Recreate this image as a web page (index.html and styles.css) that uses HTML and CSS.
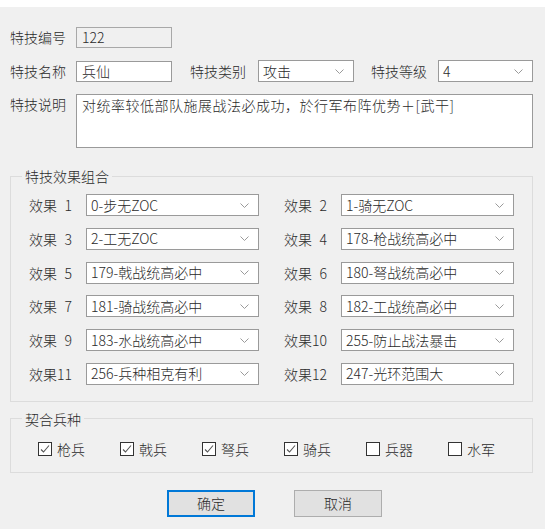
FILE: index.html
```html
<!DOCTYPE html>
<html lang="zh-CN">
<head>
<meta charset="utf-8">
<title>特技编辑</title>
<link rel="stylesheet" href="styles.css">
</head>
<body>
<div class="strip"></div>
<div class="dialog">
  <div class="row r1">
    <span class="lbl">特技编号</span>
    <div class="field disabled w96">122</div>
  </div>
  <div class="row r2">
    <span class="lbl">特技名称</span>
    <div class="field w96">兵仙</div>
    <span class="lbl2">特技类别</span>
    <div class="field select w96"><span>攻击</span><svg class="chev" width="9" height="5" viewBox="0 0 9 5"><polyline points="0.5,0.5 4.5,4.5 8.5,0.5" fill="none" stroke="#9a9a9a" stroke-width="1"/></svg></div>
    <span class="lbl3">特技等级</span>
    <div class="field select grow"><span>4</span><svg class="chev" width="9" height="5" viewBox="0 0 9 5"><polyline points="0.5,0.5 4.5,4.5 8.5,0.5" fill="none" stroke="#9a9a9a" stroke-width="1"/></svg></div>
  </div>
  <div class="row r3">
    <span class="lbl top">特技说明</span>
    <div class="field textarea grow">对统率较低部队施展战法必成功，於行军布阵优势＋[武干]</div>
  </div>

  <fieldset class="group effects">
    <legend>特技效果组合</legend>
    <div class="grid">
      <span class="elbl">效果<span class="num">1</span></span>
      <div class="field select"><span>0-步无ZOC</span><svg class="chev" width="9" height="5" viewBox="0 0 9 5"><polyline points="0.5,0.5 4.5,4.5 8.5,0.5" fill="none" stroke="#9a9a9a" stroke-width="1"/></svg></div>
      <span></span>
      <span class="elbl">效果<span class="num">2</span></span>
      <div class="field select"><span>1-骑无ZOC</span><svg class="chev" width="9" height="5" viewBox="0 0 9 5"><polyline points="0.5,0.5 4.5,4.5 8.5,0.5" fill="none" stroke="#9a9a9a" stroke-width="1"/></svg></div>

      <span class="elbl">效果<span class="num">3</span></span>
      <div class="field select"><span>2-工无ZOC</span><svg class="chev" width="9" height="5" viewBox="0 0 9 5"><polyline points="0.5,0.5 4.5,4.5 8.5,0.5" fill="none" stroke="#9a9a9a" stroke-width="1"/></svg></div>
      <span></span>
      <span class="elbl">效果<span class="num">4</span></span>
      <div class="field select"><span>178-枪战统高必中</span><svg class="chev" width="9" height="5" viewBox="0 0 9 5"><polyline points="0.5,0.5 4.5,4.5 8.5,0.5" fill="none" stroke="#9a9a9a" stroke-width="1"/></svg></div>

      <span class="elbl">效果<span class="num">5</span></span>
      <div class="field select"><span>179-戟战统高必中</span><svg class="chev" width="9" height="5" viewBox="0 0 9 5"><polyline points="0.5,0.5 4.5,4.5 8.5,0.5" fill="none" stroke="#9a9a9a" stroke-width="1"/></svg></div>
      <span></span>
      <span class="elbl">效果<span class="num">6</span></span>
      <div class="field select"><span>180-弩战统高必中</span><svg class="chev" width="9" height="5" viewBox="0 0 9 5"><polyline points="0.5,0.5 4.5,4.5 8.5,0.5" fill="none" stroke="#9a9a9a" stroke-width="1"/></svg></div>

      <span class="elbl">效果<span class="num">7</span></span>
      <div class="field select"><span>181-骑战统高必中</span><svg class="chev" width="9" height="5" viewBox="0 0 9 5"><polyline points="0.5,0.5 4.5,4.5 8.5,0.5" fill="none" stroke="#9a9a9a" stroke-width="1"/></svg></div>
      <span></span>
      <span class="elbl">效果<span class="num">8</span></span>
      <div class="field select"><span>182-工战统高必中</span><svg class="chev" width="9" height="5" viewBox="0 0 9 5"><polyline points="0.5,0.5 4.5,4.5 8.5,0.5" fill="none" stroke="#9a9a9a" stroke-width="1"/></svg></div>

      <span class="elbl">效果<span class="num">9</span></span>
      <div class="field select"><span>183-水战统高必中</span><svg class="chev" width="9" height="5" viewBox="0 0 9 5"><polyline points="0.5,0.5 4.5,4.5 8.5,0.5" fill="none" stroke="#9a9a9a" stroke-width="1"/></svg></div>
      <span></span>
      <span class="elbl">效果<span class="num">10</span></span>
      <div class="field select"><span>255-防止战法暴击</span><svg class="chev" width="9" height="5" viewBox="0 0 9 5"><polyline points="0.5,0.5 4.5,4.5 8.5,0.5" fill="none" stroke="#9a9a9a" stroke-width="1"/></svg></div>

      <span class="elbl">效果<span class="num">11</span></span>
      <div class="field select"><span>256-兵种相克有利</span><svg class="chev" width="9" height="5" viewBox="0 0 9 5"><polyline points="0.5,0.5 4.5,4.5 8.5,0.5" fill="none" stroke="#9a9a9a" stroke-width="1"/></svg></div>
      <span></span>
      <span class="elbl">效果<span class="num">12</span></span>
      <div class="field select"><span>247-光环范围大</span><svg class="chev" width="9" height="5" viewBox="0 0 9 5"><polyline points="0.5,0.5 4.5,4.5 8.5,0.5" fill="none" stroke="#9a9a9a" stroke-width="1"/></svg></div>
    </div>
  </fieldset>

  <fieldset class="group troops">
    <legend>契合兵种</legend>
    <div class="checks">
      <span class="chk"><svg width="14" height="14" viewBox="0 0 14 14"><rect x="0.5" y="0.5" width="13" height="13" fill="#fff" stroke="#333"/><polyline points="3,7.5 5.5,10 11,3.5" fill="none" stroke="#555" stroke-width="1.1"/></svg>枪兵</span>
      <span class="chk"><svg width="14" height="14" viewBox="0 0 14 14"><rect x="0.5" y="0.5" width="13" height="13" fill="#fff" stroke="#333"/><polyline points="3,7.5 5.5,10 11,3.5" fill="none" stroke="#555" stroke-width="1.1"/></svg>戟兵</span>
      <span class="chk"><svg width="14" height="14" viewBox="0 0 14 14"><rect x="0.5" y="0.5" width="13" height="13" fill="#fff" stroke="#333"/><polyline points="3,7.5 5.5,10 11,3.5" fill="none" stroke="#555" stroke-width="1.1"/></svg>弩兵</span>
      <span class="chk"><svg width="14" height="14" viewBox="0 0 14 14"><rect x="0.5" y="0.5" width="13" height="13" fill="#fff" stroke="#333"/><polyline points="3,7.5 5.5,10 11,3.5" fill="none" stroke="#555" stroke-width="1.1"/></svg>骑兵</span>
      <span class="chk"><svg width="14" height="14" viewBox="0 0 14 14"><rect x="0.5" y="0.5" width="13" height="13" fill="#fff" stroke="#333"/></svg>兵器</span>
      <span class="chk"><svg width="14" height="14" viewBox="0 0 14 14"><rect x="0.5" y="0.5" width="13" height="13" fill="#fff" stroke="#333"/></svg>水军</span>
    </div>
  </fieldset>

  <div class="buttons">
    <button class="btn default">确定</button>
    <button class="btn">取消</button>
  </div>
</div>
</body>
</html>
```

FILE: styles.css
```css
html, body {
  margin: 0;
  padding: 0;
}
body {
  width: 545px;
  height: 529px;
  overflow: hidden;
  background: #f0f0f0;
  font-family: "Noto Sans CJK SC", "Noto Sans", sans-serif;
  font-size: 14px;
  font-weight: 300;
  color: #2a2a2a;
}
.strip {
  height: 7px;
  background: #ffffff;
}
.dialog {
  padding: 0 12px 0 10px;
}
.row {
  display: flex;
  align-items: center;
}
.r1 { margin-top: 20px; }
.r2 { margin-top: 12px; }
.r3 { margin-top: 12px; align-items: flex-start; }
.lbl {
  flex: none;
  width: 66px;
  line-height: 21px;
  white-space: nowrap;
}
.lbl.top { padding-top: 0; }
.lbl2 {
  flex: none;
  width: 56px;
  margin-left: 18px;
  margin-right: 12px;
  white-space: nowrap;
  line-height: 21px;
}
.lbl3 {
  flex: none;
  width: 56px;
  margin-left: 17px;
  margin-right: 11px;
  white-space: nowrap;
  line-height: 21px;
}
.field {
  box-sizing: border-box;
  height: 21px;
  border: 1px solid #9a9a9a;
  background: #ffffff;
  padding: 0 5px;
  display: flex;
  align-items: center;
  line-height: 19px;
  white-space: nowrap;
}
.field.disabled {
  background: #f0f0f0;
  border-color: #a8a8a8;
}
.w96 { width: 96px; flex: none; }
.grow { flex: 1; }
.select {
  justify-content: space-between;
  padding: 0 9px 0 4px;
  height: 22px;
}
.chev { flex: none; }
.textarea {
  height: 54px;
  align-items: flex-start;
  padding: 1px 5px;
  letter-spacing: 0.5px;
}
.group {
  margin: 0;
  padding: 0;
  border: 1px solid #dcdcdc;
  min-width: 0;
}
.group legend {
  margin-left: 11px;
  padding: 0 3px;
  line-height: 18px;
  font-size: 14px;
}
.effects { margin-top: 19px; }
.grid {
  display: grid;
  grid-template-columns: 57px 173px 25px 57px 173px;
  grid-auto-rows: 22px;
  row-gap: 11.8px;
  padding: 9px 18px 16px 18px;
}
.elbl {
  display: flex;
  align-items: center;
  white-space: nowrap;
}
.num {
  display: inline-block;
  width: 15px;
  text-align: right;
}
.troops { margin-top: 8px; }
.checks {
  display: flex;
  padding: 12px 0 14px 27px;
  height: 18px;
}
.chk {
  flex: none;
  width: 82px;
  display: flex;
  align-items: center;
  gap: 5px;
  line-height: 18px;
}
.chk svg { flex: none; }
.buttons {
  display: flex;
  gap: 39px;
  margin-top: 17px;
  padding-left: 157px;
}
.btn {
  box-sizing: border-box;
  width: 88px;
  height: 27px;
  font-family: "Noto Sans CJK SC", "Noto Sans", sans-serif;
  font-size: 14px;
  font-weight: 300;
  color: #2a2a2a;
  background: #e1e1e1;
  border: 1px solid #adadad;
  padding: 0;
  line-height: 25px;
}
.btn.default {
  border: 2px solid #0078d7;
  line-height: 23px;
}
```
